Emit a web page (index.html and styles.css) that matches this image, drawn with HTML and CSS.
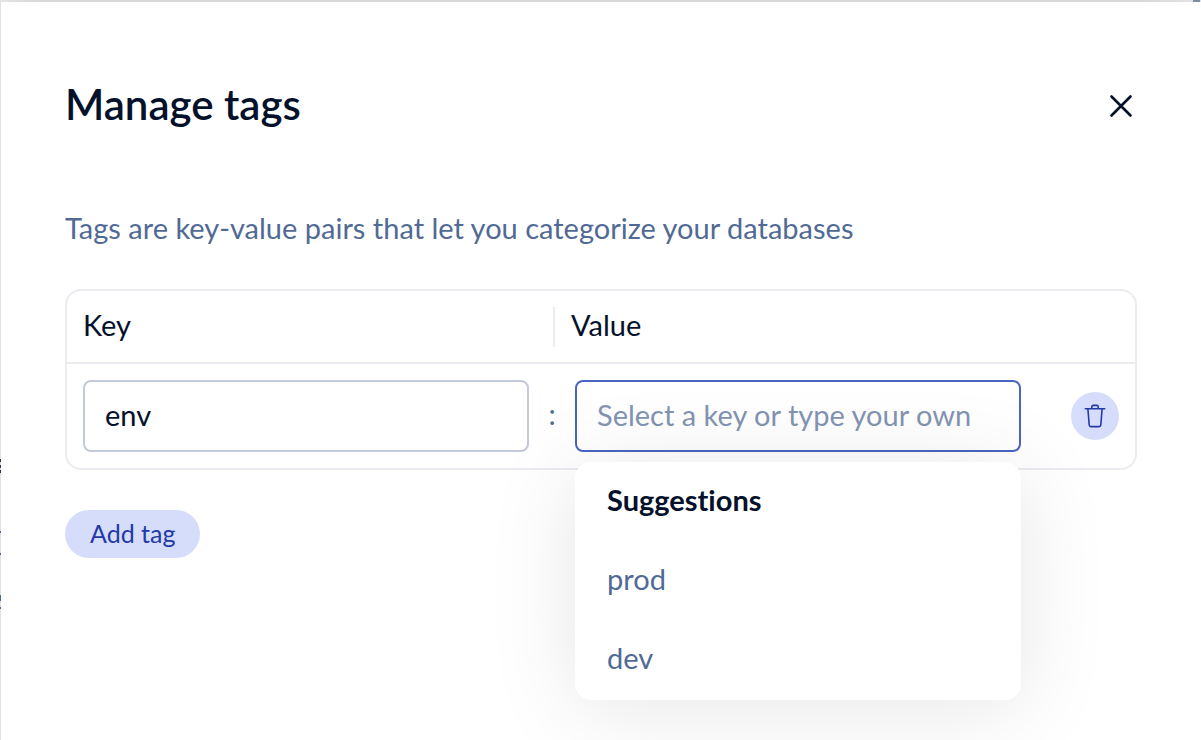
FILE: index.html
```html
<!DOCTYPE html>
<html lang="en">
<head>
<meta charset="utf-8">
<meta name="viewport" content="width=device-width, initial-scale=1">
<title>Manage tags</title>
<link rel="stylesheet" href="styles.css">
</head>
<body class="backdrop">
<main class="panel" role="dialog" aria-labelledby="panel-title">
  <header class="panel-header">
    <h1 class="panel-title" id="panel-title">Manage tags</h1>
    <button class="close-button" type="button" aria-label="Close">
      <svg width="24" height="24" viewBox="0 0 24 24" fill="none" stroke="currentColor" stroke-width="2.6" stroke-linecap="round" aria-hidden="true">
        <path d="M2.5 2.5 21.5 21.5M21.5 2.5 2.5 21.5"/>
      </svg>
    </button>
  </header>
  <p class="intro">Tags are key-value pairs that let you categorize your databases</p>
  <form class="tag-form">
    <div class="tag-card">
      <div class="tag-grid tag-head">
        <label class="head-label" for="tag-key">Key</label>
        <label class="head-label head-value" for="tag-value">Value</label>
      </div>
      <div class="tag-grid tag-row">
        <input class="field" id="tag-key" type="text" value="env">
        <span class="colon">:</span>
        <div class="value-cell">
          <input class="field field-active" id="tag-value" type="text" placeholder="Select a key or type your own" autocomplete="off">
          <section class="suggestions" aria-labelledby="suggestions-title">
            <h2 class="suggestions-title" id="suggestions-title">Suggestions</h2>
            <button class="suggestion" type="button">prod</button>
            <button class="suggestion" type="button">dev</button>
          </section>
        </div>
        <button class="delete-button" type="button" aria-label="Delete tag">
          <svg width="24" height="24" viewBox="0 0 24 24" fill="none" stroke="currentColor" stroke-width="1.6" stroke-linecap="round" stroke-linejoin="round" aria-hidden="true">
            <path d="M2.3 4.8H21.7M8.8 4.6V2.8Q8.8 1.4 10.2 1.4H13.8Q15.2 1.4 15.2 2.8V4.6"/>
            <path d="M4.9 5 6.2 21Q6.4 22.6 7.9 22.6H16.1Q17.6 22.6 17.8 21L19.1 5"/>
          </svg>
        </button>
      </div>
    </div>
    <button class="add-button" type="button">Add tag</button>
  </form>
</main>
</body>
</html>
```

FILE: styles.css
```css
*, *::before, *::after { box-sizing: border-box; }

.backdrop {
  margin: 0;
  padding: 2px 0 0 1px;
  min-height: 100vh;
  display: flex;
  font-family: Lato, "Noto Sans", sans-serif;
  font-size: 29px;
  line-height: 40px;
  font-variant-ligatures: none;
  color: #04112a;
  /* slivers of the page visible behind the panel */
  background:
    linear-gradient(#7d8aa8, #7d8aa8) right 1px top 0 / 7px 2px no-repeat,
    linear-gradient(#30324a, #30324a) 0 459px / 1px 3px no-repeat,
    linear-gradient(#30324a, #30324a) 0 465px / 1px 3px no-repeat,
    linear-gradient(#30324a, #30324a) 0 470px / 1px 3px no-repeat,
    linear-gradient(#4a5fc0, #4a5fc0) 0 531px / 1px 2px no-repeat,
    linear-gradient(#4a5fc0, #4a5fc0) 0 553px / 1px 2px no-repeat,
    linear-gradient(#516a95, #516a95) 0 595px / 1px 6px no-repeat,
    linear-gradient(#516a95, #516a95) 0 607px / 1px 2px no-repeat,
    linear-gradient(90deg, #e4e4e4, #d9d9d9 40px calc(100% - 60px), #e4e4e4) 0 0 / 100% 2px no-repeat,
    #e0e0e0;
}

.panel {
  flex: 1;
  min-width: 0;
  padding: 80px 64px 64px;
  background: #fff;
}

.panel-header {
  display: flex;
  align-items: center;
  justify-content: space-between;
  height: 48px;
}

.panel-title {
  margin: 0;
  padding-bottom: 4px;
  font-size: 42px;
  line-height: 48px;
  font-weight: 600;
}

button { font: inherit; border: 0; cursor: pointer; }

.close-button {
  display: grid;
  place-items: center;
  width: 32px;
  height: 32px;
  padding: 0;
  background: none;
  color: #04112a;
}

.intro {
  margin: 78px 0 41px;
  color: #516a95;
}

.tag-card {
  border: 2px solid #ebebf2;
  border-radius: 16px;
}

.tag-grid {
  display: grid;
  grid-template-columns: 1fr 46px 1fr 98px;
  align-items: center;
  padding: 16px;
}

.tag-head {
  padding-bottom: 15px;
  border-bottom: 2px solid #ebebf2;
}

.head-label {
  padding-bottom: 4px;
  line-height: 36px;
}

.head-value {
  grid-column: 2 / -1;
  margin-left: 24px;
  padding-left: 16px;
  border-left: 2px solid #ebebf2;
}

.field {
  display: block;
  width: 100%;
  height: 72px;
  padding: 0 20px 4px;
  border: 2px solid #c3cad9;
  border-radius: 8px;
  background: #fff;
  color: #04112a;
  font: inherit;
  font-variant-ligatures: none;
  outline: none;
}

.field::placeholder { color: #8394b2; opacity: 1; }
.field-active { border-color: #4a65c0; }

.colon {
  padding-bottom: 4px;
  text-align: center;
  color: #516a95;
}

.value-cell { position: relative; }

.suggestions {
  position: absolute;
  top: calc(100% + 10px);
  left: 0;
  right: 0;
  display: flex;
  flex-direction: column;
  padding-bottom: 1px;
  border-radius: 16px;
  background: #fff;
  box-shadow: 0 8px 90px rgba(0, 0, 0, 0.1);
}

.suggestions-title,
.suggestion {
  margin: 0;
  padding: 18px 32px 22px;
  font-size: 29px;
  line-height: 39px;
  text-align: left;
}

.suggestions-title { font-weight: 700; }
.suggestion { background: none; color: #516a95; }

.delete-button {
  justify-self: end;
  display: grid;
  place-items: center;
  width: 48px;
  height: 48px;
  padding: 0;
  border-radius: 50%;
  background: #d5ddfb;
  color: #2438a8;
}

.add-button {
  display: block;
  margin-top: 40px;
  padding: 0 25px 2px;
  height: 48px;
  border-radius: 24px;
  background: #d5ddfb;
  color: #2438a8;
  font-size: 25px;
  line-height: 46px;
}
```
